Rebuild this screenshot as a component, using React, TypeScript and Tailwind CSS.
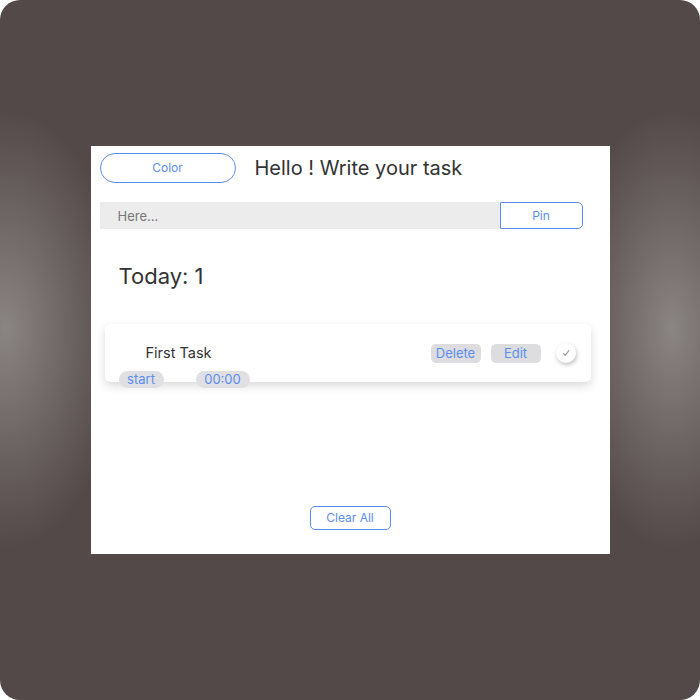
import React from "react";

export default function App() {
  return (
    <div className="bg-white w-[700px] h-[700px] font-['Inter',sans-serif]">
      <div className="w-[700px] h-[700px] rounded-[20px] bg-[#524948] [background-image:radial-gradient(120px_220px_at_5px_47%,rgba(138,132,131,1),rgba(82,73,72,0)),radial-gradient(110px_220px_at_672px_47%,rgba(138,132,131,1),rgba(82,73,72,0))] flex items-start justify-center pt-[146px]">
        <div className="w-[519px] h-[408px] bg-white flex flex-col pt-[7px] px-[9px]">
          <div className="flex items-center">
            <button className="w-[136px] h-[30px] rounded-full border border-[#5b8def] text-[#5b8def] text-[12px]">
              Color
            </button>
            <h1 className="ml-[19px] text-[20px] text-[#333] leading-none">
              Hello ! Write your task
            </h1>
          </div>

          <div className="flex mt-[19px]">
            <input
              className="w-[400px] h-[27px] bg-[#ececec] pl-[18px] text-[13px] text-[#333] placeholder:text-[#777] outline-none"
              placeholder="Here..."
            />
            <button className="w-[83px] h-[27px] border border-[#5b8def] rounded-r-[5px] text-[#5b8def] text-[12px]">
              Pin
            </button>
          </div>

          <h2 className="mt-[36px] ml-[19px] text-[22px] text-[#333] leading-none">
            Today: 1
          </h2>

          <div className="mt-[37px] ml-[5px] w-[486px] h-[58px] rounded-[6px] bg-white shadow-[0_4px_10px_rgba(0,0,0,0.15)] flex items-center pl-[41px] pr-[15px]">
            <span className="text-[14.5px] text-[#333] flex-1">First Task</span>
            <button className="w-[50px] h-[19px] rounded-[5px] bg-[#dddde0] text-[#5b8def] text-[13px] leading-none">
              Delete
            </button>
            <button className="ml-[10px] w-[50px] h-[19px] rounded-[5px] bg-[#dddde0] text-[#5b8def] text-[13px] leading-none">
              Edit
            </button>
            <span className="ml-[15px] w-[20px] h-[20px] rounded-full bg-white shadow-[1px_2px_4px_rgba(0,0,0,0.25)] flex items-center justify-center">
              <svg width="8" height="8" viewBox="0 0 10 10" fill="none">
                <path d="M1.5 5.5L4 8L8.5 2" stroke="#999" strokeWidth="1.4" strokeLinecap="round" strokeLinejoin="round" />
              </svg>
            </span>
          </div>

          <div className="flex -mt-[11px] ml-[19px] relative">
            <span className="w-[45px] h-[17px] rounded-full bg-[#e0e0e4] text-[#5b8def] text-[13px] leading-[17px] text-center">
              start
            </span>
            <span className="ml-[32px] w-[54px] h-[17px] rounded-full bg-[#e0e0e4] text-[#5b8def] text-[13px] leading-[17px] text-center">
              00:00
            </span>
          </div>

          <div className="mt-auto mb-[24px] flex justify-center">
            <button className="w-[81px] h-[24px] rounded-[5px] border border-[#5b8def] text-[#5b8def] text-[12px]">
              Clear All
            </button>
          </div>
        </div>
      </div>
    </div>
  );
}
